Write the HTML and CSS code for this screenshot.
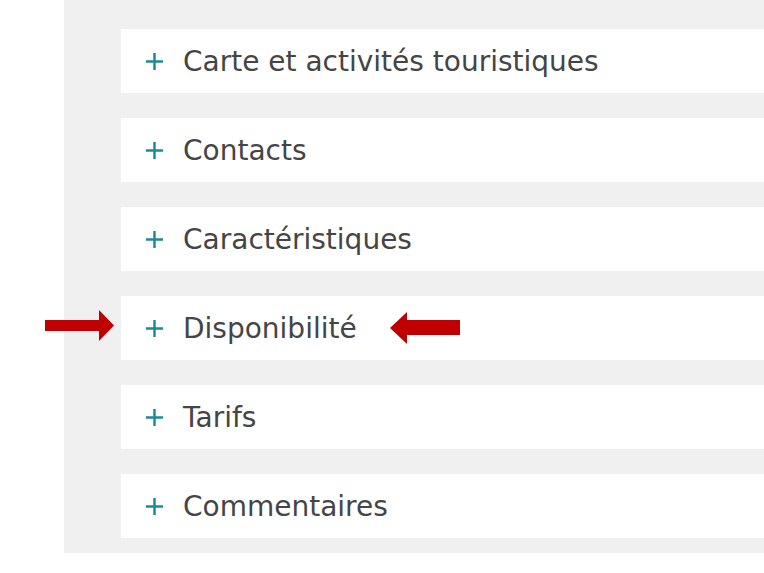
FILE: index.html
```html
<!DOCTYPE html>
<html lang="fr">
<head>
    <meta charset="UTF-8">
    <meta name="viewport" content="width=device-width, initial-scale=1.0">
    <title>Fiche hébergement</title>
    <link rel="stylesheet" href="styles.css">
</head>
<body>

<div class="page">
    <div class="panel">
        <div class="card">
            <svg class="plus" viewBox="0 0 20 20"><path d="M10 1v18M1 10h18"/></svg>
            <span class="label">Carte et activités touristiques</span>
        </div>
        <div class="card">
            <svg class="plus" viewBox="0 0 20 20"><path d="M10 1v18M1 10h18"/></svg>
            <span class="label">Contacts</span>
        </div>
        <div class="card">
            <svg class="plus" viewBox="0 0 20 20"><path d="M10 1v18M1 10h18"/></svg>
            <span class="label">Caractéristiques</span>
        </div>
        <div class="card">
            <svg class="plus" viewBox="0 0 20 20"><path d="M10 1v18M1 10h18"/></svg>
            <span class="label">Disponibilité</span>
        </div>
        <div class="card">
            <svg class="plus" viewBox="0 0 20 20"><path d="M10 1v18M1 10h18"/></svg>
            <span class="label">Tarifs</span>
        </div>
        <div class="card">
            <svg class="plus" viewBox="0 0 20 20"><path d="M10 1v18M1 10h18"/></svg>
            <span class="label">Commentaires</span>
        </div>
    </div>

    <!-- fleches d'annotation -->
    <svg class="arrow arrow-right" viewBox="0 0 69 32"><path d="M0 10h54V0l15 15.5L54 31V21H0z"/></svg>
    <svg class="arrow arrow-left" viewBox="0 0 70 32"><path d="M70 8H17V0L0 16l17 16v-9h53z"/></svg>
</div>

</body>
</html>
```

FILE: styles.css
```css
body {
    margin: 0;
    background-color: #fff;
    font-family: "DejaVu Sans", Verdana, sans-serif;
}
.page {
    position: relative;
    height: 573px;
    overflow: hidden;
}
.panel {
    margin-left: 64px;
    padding: 29px 0 15px 57px;
    background-color: #f0f0f0;
}
.card {
    height: 64px;
    margin-bottom: 25px;
    padding-left: 24px;
    display: flex;
    align-items: center;
    background-color: #fff;
}
.card:last-child {
    margin-bottom: 0;
}
.plus {
    width: 19px;
    height: 19px;
    margin-right: 19px;
    fill: none;
    stroke: #1b8a98;
    stroke-width: 2.6;
}
.label {
    font-size: 28px;
    color: #454545;
}
.arrow {
    position: absolute;
    fill: #c00000;
}
.arrow-right {
    left: 45px;
    top: 310px;
    width: 69px;
    height: 32px;
}
.arrow-left {
    left: 390px;
    top: 312px;
    width: 70px;
    height: 32px;
}
```
